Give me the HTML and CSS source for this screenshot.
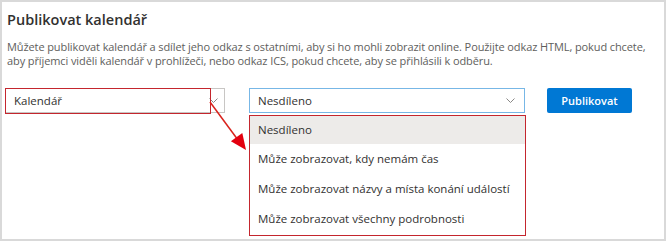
FILE: index.html
```html
<!DOCTYPE html>
<html lang="cs">
<head>
<meta charset="utf-8">
<link rel="stylesheet" href="styles.css">
</head>
<body>
<div class="frame">
  <h1 class="title">Publikovat kalendář</h1>
  <p class="desc">Můžete publikovat kalendář a sdílet jeho odkaz s ostatními, aby si ho mohli zobrazit online. Použijte odkaz HTML, pokud chcete, aby příjemci viděli kalendář v prohlížeči, nebo odkaz ICS, pokud chcete, aby se přihlásili k odběru.</p>
  <div class="row">
    <div class="select select-cal">
      <span class="select-text">Kalendář</span>
      <svg class="chev" width="9" height="5" viewBox="0 0 9 5"><path d="M0.5 0.5 L4.5 4.5 L8.5 0.5" fill="none" stroke="#8a8886" stroke-width="1"/></svg>
      <div class="mark mark-cal"></div>
    </div>
    <div class="share">
      <div class="select select-share">
        <span class="select-text">Nesdíleno</span>
        <svg class="chev" width="9" height="5" viewBox="0 0 9 5"><path d="M0.5 0.5 L4.5 4.5 L8.5 0.5" fill="none" stroke="#8a8886" stroke-width="1"/></svg>
      </div>
      <ul class="menu">
        <li class="item item-sel">Nesdíleno</li>
        <li class="item">Může zobrazovat, kdy nemám čas</li>
        <li class="item">Může zobrazovat názvy a místa konání událostí</li>
        <li class="item">Může zobrazovat všechny podrobnosti</li>
      </ul>
    </div>
    <button class="btn">Publikovat</button>
  </div>
  <svg class="arrow" width="60" height="70" viewBox="0 0 60 70">
    <line x1="5" y1="5" x2="33" y2="43" stroke="#d9221c" stroke-width="1.5"/>
    <polygon points="41,53 25.9,44.2 37.3,36" fill="#e3000f"/>
  </svg>
</div>
</body>
</html>
```

FILE: styles.css
```css
* { box-sizing: border-box; }
html, body { margin: 0; padding: 0; background: #ffffff; }
body { width: 669px; height: 242px; overflow: hidden; font-family: "Open Sans", "Noto Sans", sans-serif; }
.frame {
  position: relative;
  width: 666px;
  height: 241px;
  border: 2px solid #d9d9d9;
  padding: 8px 5px 0 5px;
}
.title {
  margin: 0;
  font-size: 14.5px;
  font-weight: 600;
  color: #323130;
  line-height: 20px;
}
.desc {
  margin: 10px 0 0 0;
  font-size: 11px;
  letter-spacing: -0.1px;
  line-height: 14px;
  color: #605e5c;
  width: 654px;
}
.row {
  display: flex;
  align-items: flex-start;
  margin: 20px 0 0 -2px;
}
.select {
  position: relative;
  height: 25px;
  border: 1px solid #c8c6c4;
  display: flex;
  align-items: center;
  padding: 0 6px 0 8px;
  font-size: 11.5px;
  color: #323130;
}
.select-text { flex: 1; }
.select-cal { width: 220px; margin-right: 24px; }
.mark-cal {
  position: absolute;
  left: -1px; top: -1px;
  width: 206px; height: 26px;
  border: 1.5px solid #c4262e;
}
.share { position: relative; width: 276px; margin-right: 22px; }
.select-share { width: 276px; border-color: #77b7e6; padding-right: 9px; }
.menu {
  list-style: none;
  margin: 2px 0 0 0;
  padding: 0;
  border: 1.5px solid #c4262e;
  width: 277px;
  height: 121px;
}
.item {
  height: 30px;
  line-height: 30px;
  padding-left: 8px;
  font-size: 11.5px;
  color: #323130;
}
.item-sel { background: #edebe9; height: 28px; line-height: 28px; }
.btn {
  height: 25px;
  width: 85px;
  border: none;
  border-radius: 2px;
  background: #0078d4;
  color: #ffffff;
  font-family: inherit;
  font-weight: 600;
  font-size: 11px;
  padding: 0;
}
.arrow { position: absolute; left: 203px; top: 95px; }
```
